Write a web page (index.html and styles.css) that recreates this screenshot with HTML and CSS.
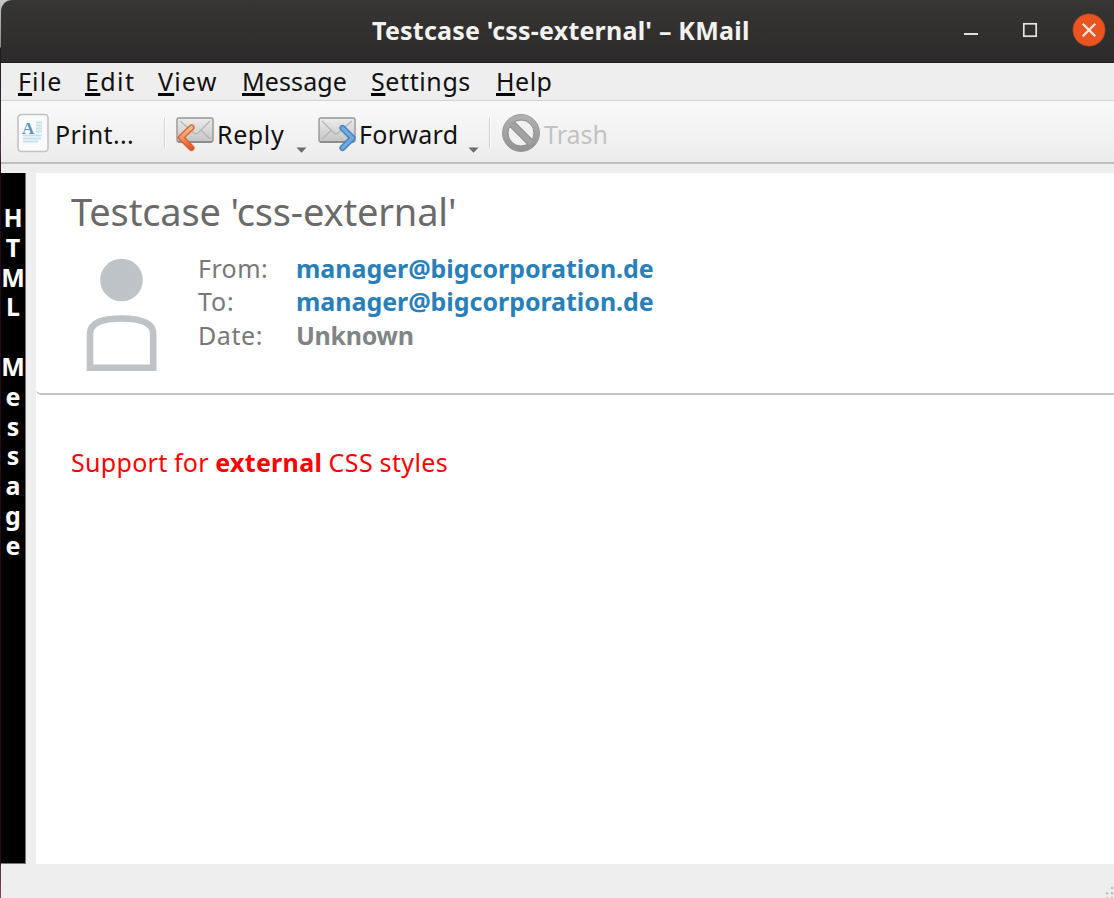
FILE: index.html
```
<!DOCTYPE html>
<html lang="en">
<head>
<meta charset="utf-8">
<title>Testcase 'css-external' – KMail</title>
<link rel="stylesheet" href="styles.css">
</head>
<body>
<div class="desktop">
<div class="window">
  <header class="titlebar">
    <h1 class="window-title">Testcase 'css-external' – KMail</h1>
    <div class="controls">
      <svg width="16" height="16" viewBox="0 0 16 16"><path d="M1 12h14" stroke="#dedede" stroke-width="2"/></svg>
      <svg width="16" height="16" viewBox="0 0 16 16"><rect x="1.8" y="1.8" width="12.4" height="12.4" fill="none" stroke="#e4e4e2" stroke-width="1.7"/></svg>
      <svg width="34" height="34" viewBox="0 0 34 34"><circle cx="17" cy="17" r="16.2" fill="#e95420" stroke="#a23f1e" stroke-width=".6"/><path d="M10.7 10.7l12.6 12.6M23.3 10.7L10.7 23.3" stroke="#fbe6de" stroke-width="2.3"/></svg>
    </div>
  </header>
  <nav class="menubar">
    <span class="m-file"><u>F</u>ile</span>
    <span class="m-edit"><u>E</u>dit</span>
    <span class="m-view"><u>V</u>iew</span>
    <span class="m-message"><u>M</u>essage</span>
    <span class="m-settings"><u>S</u>ettings</span>
    <span class="m-help"><u>H</u>elp</span>
  </nav>
  <div class="toolbar">
    <div class="tool t-print">
      <svg width="32" height="40" viewBox="0 0 32 40">
        <rect x="1" y="1.5" width="30" height="37" rx="3.5" fill="#fafafa" stroke="#c2c2c2" stroke-width="1.6"/>
        <path d="M19 9.5h6M19 12.5h6M19 15.5h6M19 18.5h6M6 22.5h19M6 25.5h18M6 28.5h15" stroke="#c5e1f1" stroke-width="1.9"/>
        <text x="5" y="21" class="glyph-a">A</text>
      </svg>
      <span>Print...</span>
    </div>
    <i class="rule"></i>
    <div class="tool t-reply">
      <svg width="41" height="40" viewBox="0 0 41 40">
        <defs>
          <linearGradient id="paper" x2="0" y2="1"><stop offset="0" stop-color="#ececec"/><stop offset="1" stop-color="#c4c4c4"/></linearGradient>
          <linearGradient id="orange" x2="0" y2="1"><stop offset="0" stop-color="#f6bd86"/><stop offset=".5" stop-color="#f4965f"/><stop offset="1" stop-color="#e0552a"/></linearGradient>
        </defs>
        <rect x="2" y="6" width="36" height="24" rx="2" fill="url(#paper)" stroke="#969696" stroke-width="1.4"/>
        <path d="M5 27l10-9M35 27l-9-9M5 9l14 12q2 1.5 4 0L35 9" fill="none" stroke="#b4b4b4" stroke-width="1.3"/>
        <path d="M3 30h34" stroke="#858585" stroke-width="1.5"/>
        <path d="M16.500 15.500L6 25.500 16.500 36" fill="none" stroke="#da6030" stroke-width="6.2" stroke-linecap="round" stroke-linejoin="round"/>
        <path d="M16.500 15.500L6 25.500 16.500 36" fill="none" stroke="url(#orange)" stroke-width="3.6" stroke-linecap="round" stroke-linejoin="round"/>
      </svg>
      <span>Reply</span>
      <svg class="drop" width="11" height="6" viewBox="0 0 11 6"><path d="M.5.5h10L5.5 5.8z" fill="#6a6a6a"/></svg>
    </div>
    <i class="rule none"></i>
    <div class="tool t-forward">
      <svg width="41" height="40" viewBox="0 0 41 40">
        <rect x="2" y="6" width="36" height="24" rx="2" fill="url(#paper)" stroke="#969696" stroke-width="1.4"/>
        <path d="M5 27l10-9M35 27l-9-9M5 9l12 12q2 2 4 0L35 9" fill="none" stroke="#b4b4b4" stroke-width="1.3"/>
        <path d="M3 30h34" stroke="#858585" stroke-width="1.5"/>
        <path d="M25.500 16L35.500 26l-10 10" fill="none" stroke="#4584bf" stroke-width="6.2" stroke-linecap="round" stroke-linejoin="round"/>
        <path d="M25.500 16L35.500 26l-10 10" fill="none" stroke="#6eaade" stroke-width="3.2" stroke-linecap="round" stroke-linejoin="round"/>
      </svg>
      <span>Forward</span>
      <svg class="drop" width="11" height="6" viewBox="0 0 11 6"><path d="M.5.5h10L5.5 5.8z" fill="#6a6a6a"/></svg>
    </div>
    <i class="rule"></i>
    <div class="tool t-trash">
      <svg width="40" height="40" viewBox="0 0 40 40">
        <defs><linearGradient id="ban" x2="0" y2="1"><stop offset="0" stop-color="#b2b2b2"/><stop offset="1" stop-color="#929292"/></linearGradient></defs>
        <circle cx="20" cy="20" r="18.5" fill="url(#ban)" stroke="#999"/>
        <circle cx="20" cy="20" r="13" fill="#f1f1f1" stroke="#8c8c8c"/>
        <path d="M11 11l18 18" stroke="#8c8c8c" stroke-width="7.5"/>
        <path d="M9.5 9.5l21 21" stroke="#a2a2a2" stroke-width="5.5"/>
      </svg>
      <span>Trash</span>
    </div>
  </div>
  <main class="viewer">
    <aside class="strip"><span>H</span><span>T</span><span>M</span><span>L</span><span>&nbsp;</span><span>M</span><span>e</span><span>s</span><span>s</span><span>a</span><span>g</span><span>e</span></aside>
    <article class="mail">
      <section class="head">
        <h2 class="subject">Testcase 'css-external'</h2>
        <div class="meta">
          <svg width="72" height="114" viewBox="0 0 72 114"><circle cx="35.5" cy="22" r="21.3" fill="#bdc3c7"/><path d="M4 109.700V76C4 64 17 60.500 35.500 60.500S67.200 64 67.200 76v33.700z" fill="none" stroke="#bdc3c7" stroke-width="6.6"/></svg>
          <dl class="fields">
            <dt class="k-from">From:</dt><dd class="addr">manager@bigcorporation.de</dd>
            <dt class="k-to">To:</dt><dd class="addr">manager@bigcorporation.de</dd>
            <dt class="k-date">Date:</dt><dd class="unknown">Unknown</dd>
          </dl>
        </div>
      </section>
      <p class="text">Support for <b>external</b> <span class="tail">CSS styles</span></p>
    </article>
  </main>
  <footer class="status">
    <svg width="11" height="12" viewBox="0 0 11 12" fill="#bdbdbd"><circle cx="9" cy="2" r="1.200"/><circle cx="4" cy="7.300" r="1.200"/><circle cx="9" cy="7.300" r="1.200"/><circle cx="4" cy="12" r="1.200"/><circle cx="9" cy="12" r="1.200"/></svg>
  </footer>
</div>
</div>
</body>
</html>
```
FILE: styles.css
```
* { box-sizing: border-box; }
body { margin: 0; font: 25px "Noto Sans", sans-serif; color: #111; overflow: hidden; }
h1, h2, p, dl, dd { margin: 0; }
svg { display: block; flex: none; }

.desktop {
  height: 898px;
  padding-left: 1px;
  background: linear-gradient(#c8c8c8 0, #8a8a8a 47px, #1d1a1b 48px, #38263a 110px, #55304f 150px, #25091c 173px, #25091c 863px, #563046 866px, #8a4352 898px);
}
.window { height: 898px; display: flex; flex-direction: column; background: #eee; border-top-left-radius: 11px; }

.titlebar {
  height: 63px;
  display: grid;
  grid-template-columns: 371px 1fr auto;
  background: linear-gradient(#373634, #2c2a2a);
  border-bottom: 1px solid #1f1e1e;
  border-top-left-radius: 11px;
}
.window-title { grid-column: 2; font-size: 25px; line-height: 61px; letter-spacing: .22px; color: #f2f2f0; white-space: nowrap; }
.controls { display: flex; align-items: center; gap: 44px; height: 60px; padding-right: 8px; }
.controls svg:nth-child(1) { margin-right: -1px; }
.controls svg:nth-child(2) { margin-right: -10px; }

.menubar {
  height: 38px;
  display: grid;
  grid-template-columns: 67px 73px 84px 129px 125px 70px;
  padding-left: 17px;
  line-height: 37px;
  border-bottom: 1px solid #d2d2d2;
}
.menubar u { text-decoration: underline 3px; text-underline-offset: 2px; text-decoration-skip-ink: none; text-decoration-color: #000; }
.m-file { letter-spacing: 1.1px; }
.m-edit { letter-spacing: 1.4px; }
.m-view { letter-spacing: 1.2px; }
.m-message { letter-spacing: .1px; }
.m-settings { letter-spacing: .6px; }
.m-help { letter-spacing: .5px; }

.toolbar {
  height: 63px;
  display: flex;
  align-items: center;
  padding: 0 0 0 16px;
  background: linear-gradient(#f9f9f9, #ececec);
  border-bottom: 2px solid #bebebe;
  white-space: nowrap;
}
.tool { display: flex; align-items: center; height: 40px; line-height: 40px; }
.tool span { padding-top: 4px; }
.rule { width: 2px; height: 30px; margin-top: 2px; border-left: 1px solid #d2d2d2; background: #fff; }
.rule.none { display: none; }
.drop { align-self: flex-end; margin-bottom: -1px; }
.t-print { width: 147px; gap: 6px; letter-spacing: .3px; }
.t-print svg { margin-top: 2px; }
.glyph-a { font: bold 17px "Liberation Serif", serif; fill: #5d94bf; }
.t-reply { width: 142px; padding-left: 9px; letter-spacing: .6px; }
.t-reply span { width: 69px; margin-left: 1px; }
.t-reply .drop { margin-left: 10px; }
.t-forward { width: 181px; padding-left: 9px; letter-spacing: .3px; }
.t-forward span { width: 100px; margin-left: 1px; }
.t-forward .drop { margin-left: 9px; }
.t-trash { padding-left: 10px; gap: 3px; color: #c2c2c2; }
.t-trash svg { margin-top: 2px; }

.viewer { height: 700px; padding-top: 9px; display: flex; gap: 10px; }
.strip {
  width: 25px;
  display: flex;
  flex-direction: column;
  align-items: center;
  padding-top: 30px;
  background: #000;
  border: solid #777;
  border-width: 0 1px 1px 0;
  color: #fff;
  font-weight: 700;
  line-height: 29.8px;
}
.mail { flex: 1; background: #fff; }
.head { height: 222px; padding: 10px 0 0 35px; border-bottom: 2px solid #c4c4c4; border-bottom-left-radius: 5px; }
.subject { font-size: 38px; font-weight: 400; line-height: 56px; letter-spacing: -.15px; color: #6a6a6a; }
.meta { display: flex; gap: 40px; padding: 19px 0 0 15px; }
.fields { display: grid; grid-template-columns: 98px auto; line-height: 33.3px; margin-top: -6px; height: 100px; }
dt { color: #787878; }
.k-from { letter-spacing: .4px; }
.k-to { letter-spacing: .8px; }
.k-date { letter-spacing: .6px; }
dd { font-weight: 700; letter-spacing: -.04px; }
.addr { color: #2980b9; }
.unknown { color: #7f8487; letter-spacing: -.3px; }
.text { padding: 50px 0 0 35px; line-height: 34px; letter-spacing: .3px; word-spacing: -.4px; color: #f00; }
.tail { letter-spacing: .4px; }

.status { flex: 1; display: flex; justify-content: flex-end; align-items: flex-end; }
```
